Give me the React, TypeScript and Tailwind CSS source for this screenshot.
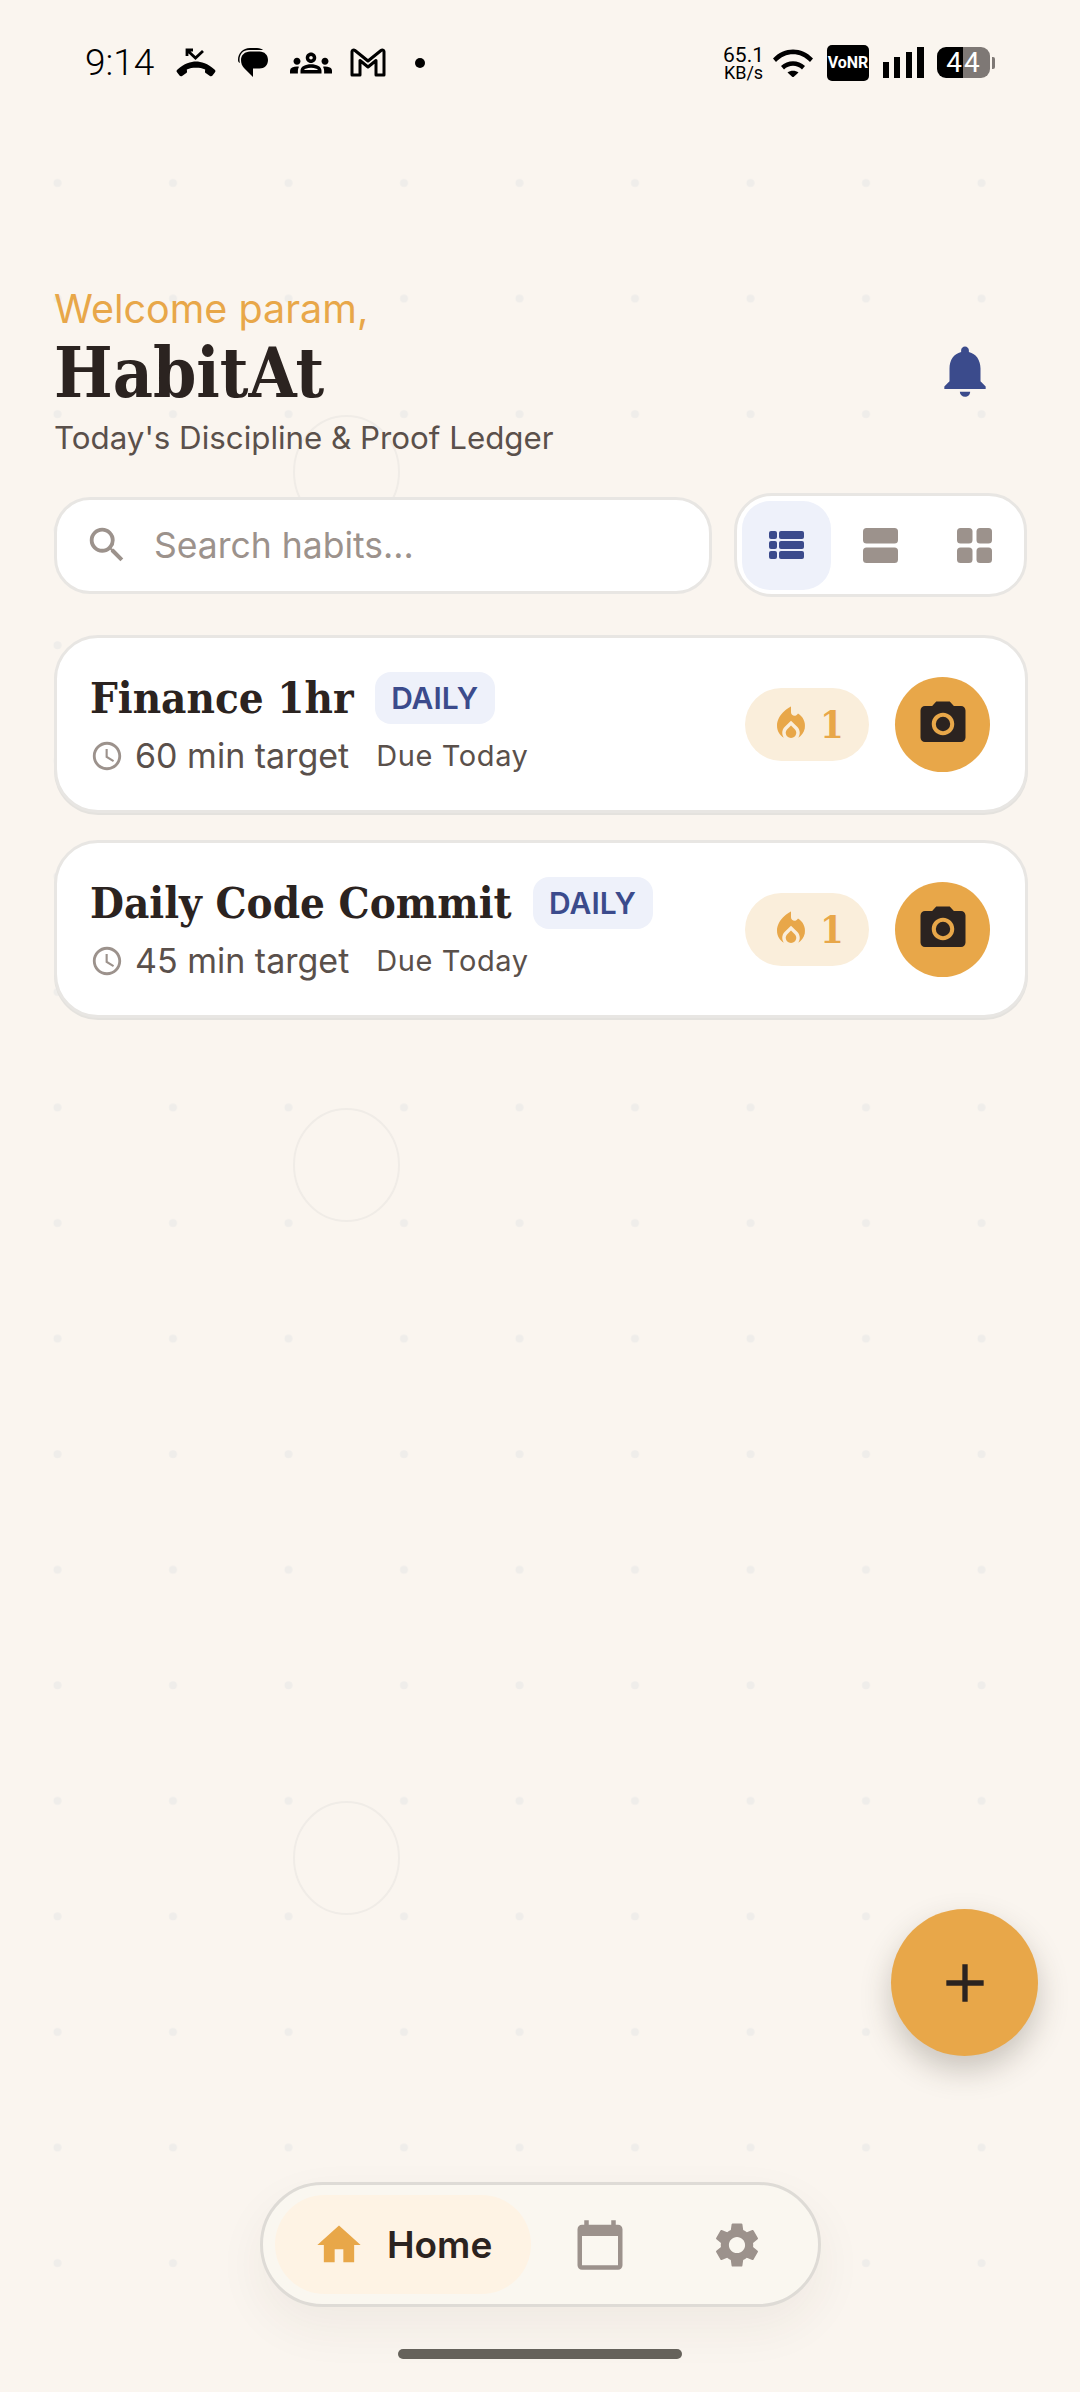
import React from "react";
import { MdOutlineGroups, MdNotifications, MdSearch, MdLocalFireDepartment, MdPhotoCamera, MdHome, MdCalendarToday, MdSettings, MdAccessTime, MdAdd } from "react-icons/md";

function CallIcon() {
  return (
    <svg width="40" height="30" viewBox="0 0 40 30" className="text-black">
      <path d="M17 2 H11 V8 M11.500 2.500 L19.500 10 L27 3" fill="none" stroke="currentColor" strokeWidth="2.800" />
      <path d="M20 13.500c-5 0-12 2-18.500 8-1 .9-1.300 1.800-.5 2.800l2.500 3.200c.7.900 1.700 1 2.600.4l3.900-2.600c.8-.5 1.100-1.200 1-2.100l-.2-1.700c2.800-1.300 5.900-1.700 9.200-1.700s6.400.4 9.200 1.700l-.2 1.700c-.1.900.2 1.600 1 2.100l3.900 2.600c.9.600 1.900.5 2.600-.4l2.500-3.200c.8-1 .5-1.900-.5-2.800C32 15.500 25 13.500 20 13.500z" fill="currentColor" />
    </svg>
  );
}

function ChatIcon() {
  return (
    <svg width="32" height="32" viewBox="0 0 32 32">
      <path d="M1 13C1 6 6 1 13 1h7c3 0 5 1 6 2H12C6 3 2.500 7 2.500 13c0 1 .2 2 .5 3C1.700 15.500 1 14.500 1 13z" fill="#000" />
      <path d="M4 13c0-5 4-8.500 9-8.500h9.500c5 0 8.500 3.500 8.500 8.500s-3.500 8.500-8.500 8.500H16V30l-9-9C5 19 4 16 4 13z" fill="#000" />
    </svg>
  );
}

function GmailIcon() {
  return (
    <svg width="36" height="29" viewBox="0 0 36 29">
      <path d="M2 27V3.500C2 2 3.800 1.500 5 2.500L18 13 31 2.500C32.200 1.500 34 2 34 3.500V27H26V12.500L18 19 10 12.500V27z" fill="none" stroke="#000" strokeWidth="3" strokeLinejoin="round" />
    </svg>
  );
}

function WifiIcon() {
  return (
    <svg width="40" height="29" viewBox="0 0 40 29">
      <path d="M0 10.500C11-1.500 29-1.500 40 10.500L37 14C27.500 3.500 12.500 3.500 3 14z" fill="#000" />
      <path d="M8 18C14.500 11.500 25.500 11.500 32 18L29 21.500C24 16.500 16 16.500 11 21.500z" fill="#000" />
      <path d="M14.500 24.500C17.500 22 22.500 22 25.500 24.500L20 29.500z" fill="#000" />
    </svg>
  );
}

function BarsIcon() {
  return (
    <svg width="41" height="31" viewBox="0 0 41 31">
      <rect x="0" y="15" width="6" height="16" fill="#000" />
      <rect x="11" y="10" width="6" height="21" fill="#000" />
      <rect x="23" y="5" width="6" height="26" fill="#000" />
      <rect x="34" y="0" width="7" height="31" fill="#000" />
    </svg>
  );
}

function ListViewIcon() {
  return (
    <svg width="35" height="28" viewBox="0 0 35 28" fill="#3b4b8c">
      <rect x="0" y="0" width="8" height="8" rx="2" />
      <rect x="0" y="10" width="8" height="8" rx="2" />
      <rect x="0" y="20" width="8" height="8" rx="2" />
      <rect x="10" y="0" width="25" height="8" rx="2" />
      <rect x="10" y="10" width="25" height="8" rx="2" />
      <rect x="10" y="20" width="25" height="8" rx="2" />
    </svg>
  );
}

function AgendaIcon() {
  return (
    <svg width="35" height="35" viewBox="0 0 35 35" fill="#9c928c">
      <rect x="0" y="0" width="35" height="15.500" rx="3.500" />
      <rect x="0" y="19.500" width="35" height="15.500" rx="3.500" />
    </svg>
  );
}

function GridIcon() {
  return (
    <svg width="35" height="35" viewBox="0 0 35 35" fill="#9c928c">
      <rect x="0" y="0" width="15.500" height="15.500" rx="3.500" />
      <rect x="19.500" y="0" width="15.500" height="15.500" rx="3.500" />
      <rect x="0" y="19.500" width="15.500" height="15.500" rx="3.500" />
      <rect x="19.500" y="19.500" width="15.500" height="15.500" rx="3.500" />
    </svg>
  );
}

function Backdrop() {
  return (
    <svg className="absolute left-0 top-[125px]" width="1080" height="2175">
      <defs>
        <pattern id="dots" x="0" y="0" width="115.500" height="115.560" patternUnits="userSpaceOnUse">
          <circle cx="57.500" cy="58" r="4" fill="#efedea" />
        </pattern>
      </defs>
      <rect width="1080" height="2175" fill="url(#dots)" />
      <ellipse cx="346.500" cy="347" rx="52.500" ry="56" fill="none" stroke="#f0ece7" strokeWidth="2" />
      <ellipse cx="346.500" cy="1040" rx="52.500" ry="56" fill="none" stroke="#f0ece7" strokeWidth="2" />
      <ellipse cx="346.500" cy="1733" rx="52.500" ry="56" fill="none" stroke="#f0ece7" strokeWidth="2" />
    </svg>
  );
}

function HabitCard({ title, minutes }: { title: string; minutes: number }) {
  return (
    <div className="flex h-[178px] items-center justify-between rounded-[44px] border-[3px] border-[#e8e6e3] bg-white pl-[33px] pr-[35px] shadow-[0_2px_0_#e4e2de]">
      <div className="flex flex-col gap-[12px]">
        <div className="flex items-center gap-[21px]">
          <span className="font-['DejaVu_Serif_Condensed','DejaVu_Serif',serif] text-[43.500px] leading-[52px] font-bold text-[#2b2320]">{title}</span>
          <span className="flex h-[52px] w-[120px] items-center justify-center rounded-[16px] bg-[#eef1fa] text-[30px] font-semibold text-[#3b4b8c]">DAILY</span>
        </div>
        <div className="flex items-center text-[#5a504b]">
          <MdAccessTime className="mr-[11px] text-[#9c928c]" size={34} />
          <span className="text-[34px] leading-[40px]">{minutes} min target</span>
          <span className="ml-[27px] text-[29px] leading-[36px] tracking-[0.6px]">Due Today</span>
        </div>
      </div>
      <div className="flex items-center gap-[26px]">
        <div className="flex h-[73px] w-[124px] items-center justify-center gap-[8px] rounded-full bg-[#faeedb] text-[#e8a749]">
          <MdLocalFireDepartment size={42} />
          <span className="font-['DejaVu_Serif_Condensed','DejaVu_Serif',serif] text-[38px] font-bold">1</span>
        </div>
        <div className="flex h-[95px] w-[95px] items-center justify-center rounded-full bg-[#e8a749] text-[#2b2320]">
          <MdPhotoCamera size={54} />
        </div>
      </div>
    </div>
  );
}

export default function App() {
  return (
    <div className="relative h-[2392px] w-[1080px] overflow-hidden bg-[#faf5ef] font-['Inter',sans-serif]">
      <Backdrop />
      <div className="relative">
        <div className="flex h-[125px] items-center justify-between pl-[85px] pr-[85px] text-black">
          <div className="flex items-center">
            <span className="font-['Roboto',sans-serif] text-[37px] leading-none font-light">9:14</span>
            <div className="ml-[22px] flex items-center gap-[21px]">
              <CallIcon />
              <ChatIcon />
              <MdOutlineGroups size={42} />
              <div className="-ml-[3px]"><GmailIcon /></div>
              <span className="ml-[8px] h-[10px] w-[10px] rounded-full bg-black" />
            </div>
          </div>
          <div className="flex items-center">
            <div className="flex flex-col items-center font-['Roboto',sans-serif]">
              <span className="text-[21px] leading-[20px]">65.1</span>
              <span className="text-[18px] leading-[16px]">KB/s</span>
            </div>
            <div className="ml-[9px]"><WifiIcon /></div>
            <div className="ml-[14px] flex h-[36px] w-[42px] items-center justify-center rounded-[5px] bg-black font-['Roboto',sans-serif] text-[16px] font-bold text-white">VoNR</div>
            <div className="ml-[14px]"><BarsIcon /></div>
            <div className="relative ml-[13px] flex h-[31px] items-center">
              <div className="flex h-[31px] w-[53px] overflow-hidden rounded-[9px] font-['Roboto',sans-serif] text-[28px] text-white">
                <span className="flex w-[26px] items-center justify-end bg-black pr-[1px]">4</span>
                <span className="flex w-[27px] items-center bg-[#7e7875] pl-[1px]">4</span>
              </div>
              <span className="ml-[2px] h-[12px] w-[3px] rounded-r-[2px] bg-[#7e7875]" />
            </div>
          </div>
        </div>

        <div className="px-[52px] pt-[162px]">
          <div className="flex items-center justify-between pl-[2px] pr-[32px]">
            <div className="flex flex-col">
              <span className="text-[39.500px] leading-[44px] text-[#e8a749]">Welcome param,</span>
              <span className="font-['DejaVu_Serif_Condensed','DejaVu_Serif',serif] text-[69px] leading-[84px] font-bold text-[#2b2320]">HabitAt</span>
              <span className="text-[31.300px] leading-[46px] text-[#5a504b]">Today's Discipline &amp; Proof Ledger</span>
            </div>
            <MdNotifications className="mb-[6px] text-[#3b4b8c]" size={62} />
          </div>

          <div className="mt-[32px] flex items-center gap-[22px] pl-[2px]">
            <div className="flex h-[97px] w-[658px] items-center gap-[24px] rounded-[36px] border-[3px] border-[#e8e6e3] bg-white pl-[27px]">
              <MdSearch className="text-[#9c928c]" size={46} />
              <span className="pt-[2px] text-[35.500px] text-[#9c928c]">Search habits...</span>
            </div>
            <div className="flex h-[104px] w-[293px] items-center rounded-[38px] border-[3px] border-[#e8e6e3] bg-white pl-[5px]">
              <div className="flex h-[89px] w-[89px] items-center justify-center rounded-[28px] bg-[#eef1fa]"><ListViewIcon /></div>
              <div className="flex w-[99px] items-center justify-center"><AgendaIcon /></div>
              <div className="flex w-[89px] items-center justify-center"><GridIcon /></div>
            </div>
          </div>

          <div className="mt-[38px] flex flex-col gap-[27px] pl-[2px]">
            <HabitCard title="Finance 1hr" minutes={60} />
            <HabitCard title="Daily Code Commit" minutes={45} />
          </div>
        </div>
      </div>

      <button className="absolute left-[891px] top-[1909px] flex h-[147px] w-[147px] items-center justify-center rounded-full bg-[#e8a749] text-[#2b2320] shadow-[0_14px_30px_rgba(60,50,40,0.25)]">
        <MdAdd size={64} />
      </button>

      <div className="absolute left-[260px] top-[2182px] flex h-[125px] w-[561px] items-center rounded-full border-[3px] border-[#dedbd6] bg-[#faf7f0] pl-[12px] shadow-[0_20px_50px_rgba(60,50,40,0.06)]">
        <div className="flex h-[99px] w-[256px] items-center gap-[22px] rounded-full bg-[#fef3e4] pl-[38px]">
          <MdHome className="text-[#e8a749]" size={52} />
          <span className="text-[37px] font-semibold text-[#2b2320]">Home</span>
        </div>
        <MdCalendarToday className="ml-[42px] text-[#9c928c]" size={54} />
        <MdSettings className="ml-[83px] text-[#9c928c]" size={54} />
      </div>

      <div className="absolute left-[398px] top-[2349px] h-[10px] w-[284px] rounded-full bg-[#66625b]" />
    </div>
  );
}
